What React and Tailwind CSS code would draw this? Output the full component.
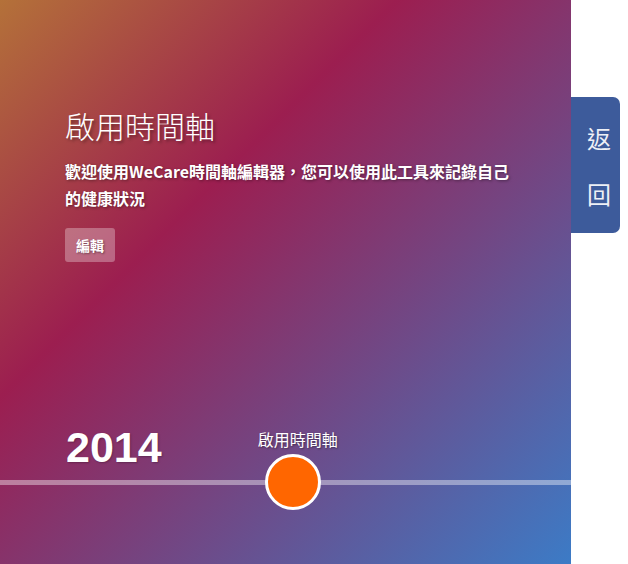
export default function App() {
  const cjk = { fontFamily: '"Noto Sans CJK TC", "Noto Sans", sans-serif' };
  return (
    <div className="flex w-[628px] h-[564px] bg-white overflow-hidden" style={cjk}>
      <div className="relative flex flex-col w-[571px] h-[564px] shrink-0 pt-[105px] text-white bg-[linear-gradient(135deg,#b47139_0%,#9c1e50_35%,#3c7bc6_100%)]">
        <div className="pl-[65px] text-[30px] leading-[40px] h-[40px] font-light [text-shadow:2px_2px_3px_rgba(0,0,0,0.35)]">
          啟用時間軸
        </div>
        <p className="pl-[65px] mt-[13px] w-[518px] text-[16px] leading-[27px] font-bold [text-shadow:1px_1px_3px_rgba(0,0,0,0.4)]">
          歡迎使用WeCare時間軸編輯器，您可以使用此工具來記錄自己的健康狀況
        </p>
        <div className="pl-[65px] mt-[16px]">
          <button className="h-[34px] px-[11px] rounded-[3px] bg-white/30 text-[14px] font-bold text-white [text-shadow:1px_1px_2px_rgba(0,0,0,0.4)]">
            編輯
          </button>
        </div>
        <div className="mt-[164px]">
          <div className="flex items-start pl-[66px]">
            <div className="text-[43px] leading-[42px] font-bold [font-family:'Liberation_Sans',Arial,sans-serif] [text-shadow:1px_1px_2px_rgba(0,0,0,0.25)]">
              2014
            </div>
            <div className="ml-[96px] mt-[1px] text-[16px] leading-[24px] [text-shadow:1px_1px_2px_rgba(0,0,0,0.4)]">
              啟用時間軸
            </div>
          </div>
          <div className="relative mt-[12px] h-[5px] bg-white/40">
            <div className="absolute left-[265px] top-[-26px] w-[56px] h-[56px] rounded-full bg-[#ff6600] border-[3px] border-white" />
          </div>
        </div>
      </div>
      <div className="flex-1">
        <div className="mt-[97px] w-[49px] h-[136px] bg-[#3d5b9b] rounded-r-[7px] flex flex-col items-center pl-[7px] pt-[13px] text-[#eef0f6] text-[24px] leading-[56px]">
          <span>返</span>
          <span>回</span>
        </div>
      </div>
    </div>
  );
}
